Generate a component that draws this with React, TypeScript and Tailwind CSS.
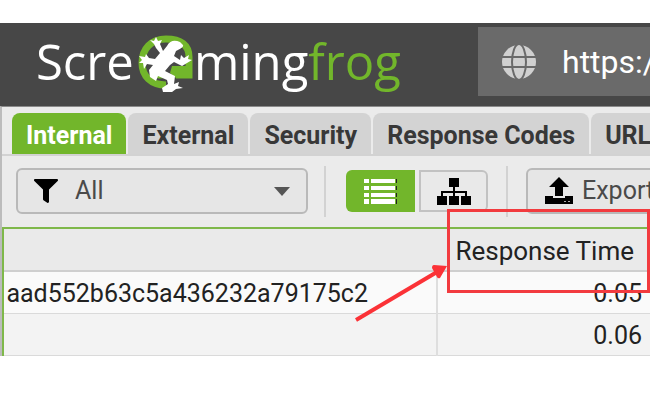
import { FaFilter } from 'react-icons/fa'

const tabs = ['Internal', 'External', 'Security', 'Response Codes', 'URL']

const rows = [
  { hash: 'aad552b63c5a436232a79175c2', time: '0.05' },
  { hash: '', time: '0.06' },
]

function FrogMark() {
  return (
    <svg viewBox="0 0 56 60" className="mt-2 ml-1 h-[60px] w-14 shrink-0" aria-hidden="true">
      <path
        d="M28 50 C13 50 4 41 4 28 C4 14 13 4 28 4 C43 4 51 10 51 22 V40 H38"
        fill="none"
        stroke="#72b62b"
        strokeWidth="7"
      />
      <path d="M34 31 H52 V43 H38 L32 38Z" fill="#72b62b" />
      <path d="M16 36 C16 43 22 42 29 40" fill="none" stroke="#72b62b" strokeWidth="4" />
      <path
        d="M12 5 L16 6 L18 2 L20 6 L24 5 L22 9 L25 16 L29 11 C32 5 37 5 42 7 L45 10 C46 12 42 14 38 16 L36 21 L42 25 L43 20 L46 23 L51 20 L50 24 L54 25 L49 28 L44 31 L36 27 L32 30 L27 36 L37 41 L36 49 L41 47 L40 51 L45 53 L38 54 L34 57 L25 57 L24 53 L30 49 L29 45 L20 41 L18 46 L12 42 L11 35 L15 30 L9 29 L6 34 L5 28 L1 28 L4 25 L1 21 L7 22 L8 19 L11 23 L17 24 L22 18 L18 13 L16 9Z"
        fill="#fff"
      />
    </svg>
  )
}

function Globe() {
  return (
    <svg viewBox="0 0 34 34" className="size-[34px] shrink-0" aria-hidden="true">
      <circle cx="17" cy="17" r="17" fill="#d0d0d0" />
      <g fill="none" stroke="#6a6a6a" strokeWidth="2">
        <ellipse cx="17" cy="17" rx="7" ry="18" />
        <path d="M0 12h34M0 22h34" />
      </g>
    </svg>
  )
}

function ListIcon() {
  return (
    <svg viewBox="0 0 34 25" className="h-[25px] w-[34px]" aria-hidden="true">
      <path d="M0 0h5v4H0zM7 0h24v4H7zM0 7h5v4H0zM7 7h24v4H7zM0 14h5v4H0zM7 14h24v4H7zM0 20h5v5H0zM7 20h24v5H7z" fill="#fff" />
      <path d="M32 0h1v4h-1zM32 7h1v4h-1zM32 14h1v4h-1zM32 20h1v5h-1z" fill="#222" />
    </svg>
  )
}

function TreeIcon() {
  return (
    <svg viewBox="0 0 34 27" className="h-[27px] w-[34px]" aria-hidden="true">
      <path d="M12 0h10v9H12zM0 18h10v9H0zM12 18h10v9H12zM24 18h10v9H24z" />
      <path d="M17 8v11M5 19v-5h24v5" fill="none" stroke="#000" strokeWidth="2" />
    </svg>
  )
}

function UploadIcon() {
  return (
    <svg viewBox="0 0 30 28" className="h-7 w-[30px] shrink-0" aria-hidden="true">
      <path d="M15 0 L25 10 H19 V19 H11 V10 H5Z" fill="#000" />
      <path d="M1 19 H9 V21 H21 V19 H29 V27 H1Z" fill="#000" />
      <path d="M20 24h2v1h-2zM24 24h2v1h-2z" fill="#aaa" />
    </svg>
  )
}

function Header() {
  return (
    <header className="flex h-[83px] items-start justify-between bg-[#474747] pt-1">
      <div className="flex items-start pl-9 font-['Open_Sans',sans-serif] text-[49px] leading-[68px] font-medium text-white">
        <span>Scre</span>
        <FrogMark />
        <span>ming</span>
        <span className="text-[#72b62b]">frog</span>
      </div>
      <label className="flex h-[69px] w-[172px] shrink-0 items-center gap-[26px] bg-[#6a6a6a] pl-6">
        <Globe />
        <input
          aria-label="URL to spider"
          defaultValue="https://"
          className="w-full min-w-0 bg-transparent text-[32px] text-white outline-none"
        />
      </label>
    </header>
  )
}

function Toolbar() {
  return (
    <div className="flex h-[71px] items-center overflow-hidden pb-[1px] pl-[14px] text-[25px] leading-8 whitespace-nowrap text-[#4a4a4a]">
      <div className="relative mr-4 w-[292px] shrink-0">
        <select
          aria-label="Filter"
          className="h-[46px] w-full appearance-none rounded-md border-2 border-[#b9b9b9] bg-[#e6e6e6] pl-[57px]"
        >
          <option>All</option>
        </select>
        <FaFilter className="pointer-events-none absolute top-[11px] left-[18px] size-6 text-black" />
        <svg viewBox="0 0 16 9" className="pointer-events-none absolute top-[19px] right-[18px] h-[9px] w-4">
          <path d="M0 0h16L8 9z" fill="#555" />
        </svg>
      </div>
      <div className="mr-5 h-[51px] w-[2px] shrink-0 bg-[#d2d2d2]" />
      <button aria-label="List view" className="mr-1 flex h-[42px] w-[69px] shrink-0 items-center justify-center rounded-l-md bg-[#72b62b]">
        <ListIcon />
      </button>
      <button
        aria-label="Tree view"
        className="mr-[18px] flex h-[42px] w-[69px] shrink-0 items-center justify-center rounded-r-md border-2 border-[#c2c2c2] bg-[#e9e9e9]"
      >
        <TreeIcon />
      </button>
      <div className="mr-[18px] h-[51px] w-[2px] shrink-0 bg-[#d2d2d2]" />
      <button className="flex h-[46px] shrink-0 items-center gap-2 rounded-md border-2 border-[#b9b9b9] bg-[#e6e6e6] px-4">
        <UploadIcon />
        Export
      </button>
    </div>
  )
}

function Results() {
  return (
    <div className="relative border-t-2 border-l-2 border-[#7fb84a]">
      <table className="w-full table-fixed border-collapse text-[25px] leading-8 text-[#222]">
        <thead>
          <tr className="h-[42px] border-b-2 border-[#cfcfcf] bg-[#eaeaea]">
            <th aria-label="Hash" />
            <th className="w-[213px] pt-[2px] pr-4 text-right text-[26px] font-normal whitespace-nowrap">Response Time</th>
          </tr>
        </thead>
        <tbody>
          {rows.map((row) => (
            <tr key={row.time} className="h-[42px] border-b border-[#dadada] bg-[#fafafa] even:bg-[#f3f3f3]">
              <td className="overflow-hidden border-r-2 border-[#dedede] pt-1 whitespace-nowrap">
                <div className="flex justify-end pr-[68px]">{row.hash}</div>
              </td>
              <td className="pt-1 pr-2 text-right">{row.time}</td>
            </tr>
          ))}
        </tbody>
      </table>

      {/* highlight around the Response Time column */}
      <div className="pointer-events-none absolute -top-5 right-0 h-[84px] w-[203px] border-3 border-[#f23b3f]" />
      <svg viewBox="0 0 94 58" className="pointer-events-none absolute top-[35px] right-[201px] h-[58px] w-[94px]" aria-hidden="true">
        <path d="M1 56 L82 8" stroke="#fb3237" strokeWidth="4" />
        <path d="M79 1 L92 2 L85 14 Q83 15 82 13 L77 4 Q77 1 79 1Z" fill="#fb3237" />
      </svg>
    </div>
  )
}

export default function App() {
  return (
    <div className="min-h-screen overflow-hidden bg-white pt-[23px] font-[Roboto,sans-serif]">
      <Header />
      <main className="border-t border-l-2 border-t-[#8a8a8a] border-l-[#bcbcbc] bg-[#ebebeb]">
        <nav className="flex gap-[2px] overflow-hidden border-b-2 border-[#d2d2d2] pt-[6px] pl-[10px]">
          {tabs.map((tab) => (
            <button
              key={tab}
              className="h-[41px] shrink-0 rounded-t-lg bg-[#d3d3d3] px-[14px] pt-1 text-[25px] leading-8 font-bold text-[#383838] first:bg-[#72b62b] first:text-white"
            >
              {tab}
            </button>
          ))}
        </nav>
        <Toolbar />
        <Results />
      </main>
    </div>
  )
}
